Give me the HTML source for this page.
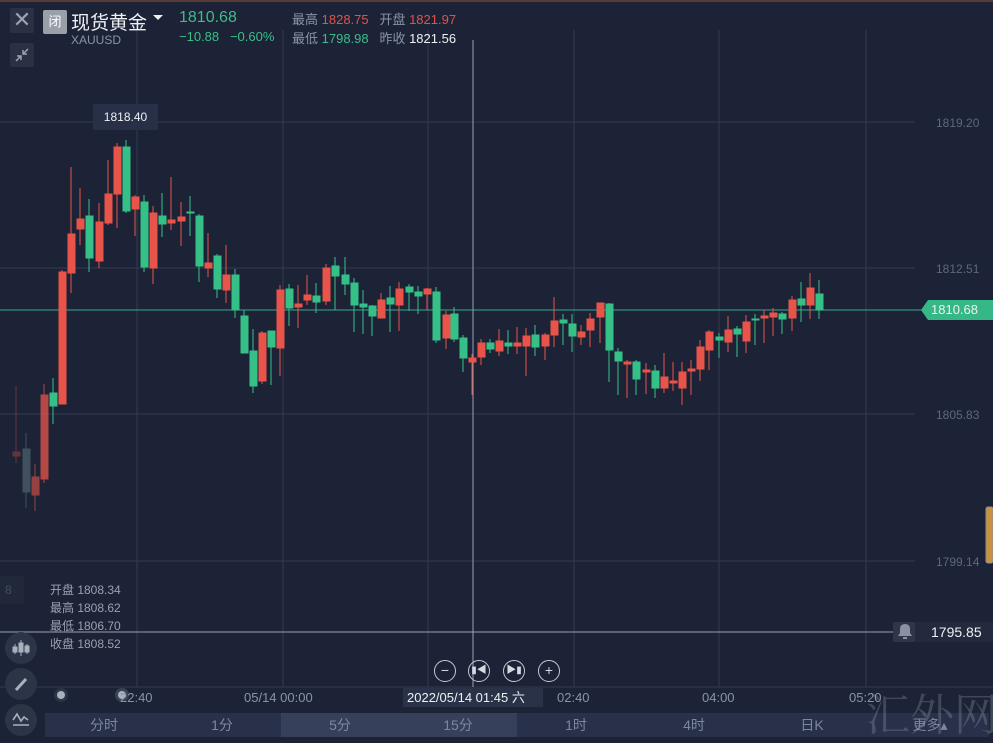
<!DOCTYPE html>
<html><head><meta charset="utf-8"><style>
*{margin:0;padding:0;box-sizing:border-box}
body{width:993px;height:739px;background:#1c2336;position:relative;overflow:hidden;font-family:"Liberation Sans","Noto Sans CJK SC",sans-serif;color:#8a93a6}
.a{position:absolute;white-space:nowrap}
.g{color:#3dbd88}.r{color:#e0534a}.w{color:#eef0f4}
.tab{position:absolute;top:713px;height:24px;text-align:center;font-size:14px;line-height:24px;color:#7d879c}
.circ{position:absolute;width:22px;height:22px;border:1.5px solid #c5cad5;border-radius:50%;color:#d5d9e2;font-size:14px;line-height:19px;text-align:center}
.lb{position:absolute;left:5px;width:32px;height:32px;border-radius:50%;background:#2c3447}
</style></head><body>
<div class="a" style="left:0;top:0;width:993px;height:2px;background:#5a3a36"></div>
<svg class="a" style="left:0;top:0" width="993" height="739">
<g stroke="#333b50" stroke-width="1">
<line x1="0" y1="122" x2="915" y2="122"/><line x1="0" y1="268" x2="915" y2="268"/>
<line x1="0" y1="414" x2="915" y2="414"/><line x1="0" y1="561" x2="915" y2="561"/>
<line x1="137" y1="30" x2="137" y2="687"/><line x1="283" y1="30" x2="283" y2="687"/>
<line x1="428" y1="30" x2="428" y2="687"/><line x1="574" y1="30" x2="574" y2="687"/>
<line x1="719" y1="30" x2="719" y2="687"/><line x1="866" y1="30" x2="866" y2="687"/>
<line x1="0" y1="687" x2="993" y2="687"/>
</g>
<line x1="0" y1="310" x2="922" y2="310" stroke="#3aa58a" stroke-width="1"/>
<line x1="473" y1="40" x2="473" y2="687" stroke="#9aa1b0" stroke-width="1"/>
<line x1="0" y1="632" x2="893" y2="632" stroke="#9aa1b0" stroke-width="1"/>
<g opacity=".35" stroke="#e8544a" fill="#e8544a"><line x1="16" y1="386" x2="16" y2="463"/><rect x="13" y="452" width="7" height="4"/></g>
<g opacity=".45" stroke="#6c8890" fill="#6c8890"><line x1="26" y1="433" x2="26" y2="508"/><rect x="23" y="449" width="7" height="43"/></g>
<g opacity=".6" stroke="#e8544a" fill="#e8544a"><line x1="35" y1="464" x2="35" y2="511"/><rect x="32" y="477" width="7" height="18"/></g>
<g opacity=".75" stroke="#e8544a" fill="#e8544a"><line x1="44" y1="384" x2="44" y2="483"/><rect x="41" y="395" width="7" height="84"/></g>
<g stroke="#e8544a" fill="#e8544a">
<line x1="62" y1="270" x2="62" y2="404"/><rect x="59" y="272" width="7" height="132"/>
<line x1="71" y1="167" x2="71" y2="293"/><rect x="68" y="234" width="7" height="39"/>
<line x1="80" y1="188" x2="80" y2="245"/><rect x="77" y="219" width="7" height="10"/>
<line x1="99" y1="203" x2="99" y2="268"/><rect x="96" y="222" width="7" height="39"/>
<line x1="108" y1="160" x2="108" y2="225"/><rect x="105" y="194" width="7" height="29"/>
<line x1="117" y1="143" x2="117" y2="228"/><rect x="114" y="147" width="7" height="47"/>
<line x1="135" y1="195" x2="135" y2="236"/><rect x="132" y="197" width="7" height="12"/>
<line x1="153" y1="206" x2="153" y2="284"/><rect x="150" y="213" width="7" height="55"/>
<line x1="171" y1="177" x2="171" y2="230"/><rect x="168" y="220" width="7" height="3"/>
<line x1="181" y1="202" x2="181" y2="246"/><rect x="178" y="217" width="7" height="4"/>
<line x1="208" y1="233" x2="208" y2="277"/><rect x="205" y="263" width="7" height="5"/>
<line x1="226" y1="245" x2="226" y2="303"/><rect x="223" y="275" width="7" height="15"/>
<line x1="262" y1="331" x2="262" y2="384"/><rect x="259" y="333" width="7" height="48"/>
<line x1="280" y1="285" x2="280" y2="376"/><rect x="277" y="290" width="7" height="58"/>
<line x1="298" y1="285" x2="298" y2="328"/><rect x="295" y="304" width="7" height="3"/>
<line x1="307" y1="275" x2="307" y2="305"/><rect x="304" y="295" width="7" height="5"/>
<line x1="326" y1="264" x2="326" y2="305"/><rect x="323" y="268" width="7" height="33"/>
<line x1="381" y1="293" x2="381" y2="318"/><rect x="378" y="300" width="7" height="18"/>
<line x1="399" y1="282" x2="399" y2="331"/><rect x="396" y="289" width="7" height="16"/>
<line x1="427" y1="288" x2="427" y2="310"/><rect x="424" y="289" width="7" height="5"/>
<line x1="446" y1="311" x2="446" y2="349"/><rect x="443" y="315" width="7" height="23"/>
<line x1="472" y1="354" x2="472" y2="395"/><rect x="469" y="358" width="7" height="4"/>
<line x1="481" y1="339" x2="481" y2="365"/><rect x="478" y="343" width="7" height="14"/>
<line x1="499" y1="329" x2="499" y2="356"/><rect x="496" y="341" width="7" height="10"/>
<line x1="517" y1="327" x2="517" y2="354"/><rect x="514" y="343" width="7" height="3"/>
<line x1="526" y1="328" x2="526" y2="376"/><rect x="523" y="336" width="7" height="10"/>
<line x1="545" y1="333" x2="545" y2="360"/><rect x="542" y="335" width="7" height="11"/>
<line x1="554" y1="297" x2="554" y2="347"/><rect x="551" y="321" width="7" height="14"/>
<line x1="581" y1="325" x2="581" y2="345"/><rect x="578" y="332" width="7" height="5"/>
<line x1="590" y1="313" x2="590" y2="347"/><rect x="587" y="319" width="7" height="11"/>
<line x1="600" y1="303" x2="600" y2="343"/><rect x="597" y="303" width="7" height="14"/>
<line x1="627" y1="360" x2="627" y2="398"/><rect x="624" y="362" width="7" height="2"/>
<line x1="646" y1="363" x2="646" y2="394"/><rect x="643" y="370" width="7" height="2"/>
<line x1="664" y1="353" x2="664" y2="393"/><rect x="661" y="377" width="7" height="11"/>
<line x1="673" y1="362" x2="673" y2="391"/><rect x="670" y="381" width="7" height="2"/>
<line x1="682" y1="362" x2="682" y2="405"/><rect x="679" y="372" width="7" height="16"/>
<line x1="691" y1="360" x2="691" y2="395"/><rect x="688" y="369" width="7" height="2"/>
<line x1="700" y1="340" x2="700" y2="381"/><rect x="697" y="347" width="7" height="22"/>
<line x1="709" y1="330" x2="709" y2="370"/><rect x="706" y="332" width="7" height="18"/>
<line x1="728" y1="316" x2="728" y2="352"/><rect x="725" y="330" width="7" height="12"/>
<line x1="746" y1="315" x2="746" y2="353"/><rect x="743" y="322" width="7" height="19"/>
<line x1="764" y1="310" x2="764" y2="343"/><rect x="761" y="316" width="7" height="2"/>
<line x1="773" y1="308" x2="773" y2="336"/><rect x="770" y="313" width="7" height="4"/>
<line x1="792" y1="296" x2="792" y2="331"/><rect x="789" y="300" width="7" height="18"/>
<line x1="810" y1="273" x2="810" y2="319"/><rect x="807" y="288" width="7" height="17"/>
</g>
<g stroke="#35c088" fill="#35c088">
<line x1="53" y1="378" x2="53" y2="424"/><rect x="50" y="393" width="7" height="13"/>
<line x1="89" y1="199" x2="89" y2="272"/><rect x="86" y="216" width="7" height="42"/>
<line x1="126" y1="140" x2="126" y2="213"/><rect x="123" y="147" width="7" height="64"/>
<line x1="144" y1="195" x2="144" y2="272"/><rect x="141" y="202" width="7" height="65"/>
<line x1="162" y1="193" x2="162" y2="237"/><rect x="159" y="216" width="7" height="8"/>
<line x1="190" y1="196" x2="190" y2="236"/><rect x="187" y="212" width="7" height="1"/>
<line x1="199" y1="214" x2="199" y2="282"/><rect x="196" y="216" width="7" height="50"/>
<line x1="217" y1="254" x2="217" y2="298"/><rect x="214" y="256" width="7" height="33"/>
<line x1="235" y1="269" x2="235" y2="318"/><rect x="232" y="275" width="7" height="35"/>
<line x1="244" y1="310" x2="244" y2="353"/><rect x="241" y="316" width="7" height="37"/>
<line x1="253" y1="329" x2="253" y2="393"/><rect x="250" y="351" width="7" height="35"/>
<line x1="271" y1="331" x2="271" y2="385"/><rect x="268" y="331" width="7" height="16"/>
<line x1="289" y1="284" x2="289" y2="326"/><rect x="286" y="289" width="7" height="19"/>
<line x1="316" y1="283" x2="316" y2="313"/><rect x="313" y="296" width="7" height="6"/>
<line x1="335" y1="257" x2="335" y2="310"/><rect x="332" y="266" width="7" height="10"/>
<line x1="345" y1="257" x2="345" y2="295"/><rect x="342" y="275" width="7" height="9"/>
<line x1="354" y1="278" x2="354" y2="332"/><rect x="351" y="283" width="7" height="22"/>
<line x1="363" y1="290" x2="363" y2="334"/><rect x="360" y="304" width="7" height="3"/>
<line x1="372" y1="305" x2="372" y2="336"/><rect x="369" y="306" width="7" height="10"/>
<line x1="390" y1="286" x2="390" y2="332"/><rect x="387" y="298" width="7" height="6"/>
<line x1="409" y1="284" x2="409" y2="311"/><rect x="406" y="287" width="7" height="5"/>
<line x1="418" y1="286" x2="418" y2="314"/><rect x="415" y="292" width="7" height="4"/>
<line x1="436" y1="287" x2="436" y2="343"/><rect x="433" y="292" width="7" height="48"/>
<line x1="454" y1="307" x2="454" y2="342"/><rect x="451" y="314" width="7" height="25"/>
<line x1="463" y1="335" x2="463" y2="372"/><rect x="460" y="338" width="7" height="20"/>
<line x1="490" y1="339" x2="490" y2="353"/><rect x="487" y="343" width="7" height="6"/>
<line x1="508" y1="330" x2="508" y2="354"/><rect x="505" y="343" width="7" height="3"/>
<line x1="535" y1="325" x2="535" y2="356"/><rect x="532" y="335" width="7" height="12"/>
<line x1="563" y1="314" x2="563" y2="345"/><rect x="560" y="320" width="7" height="3"/>
<line x1="572" y1="314" x2="572" y2="352"/><rect x="569" y="324" width="7" height="12"/>
<line x1="609" y1="303" x2="609" y2="382"/><rect x="606" y="304" width="7" height="46"/>
<line x1="618" y1="348" x2="618" y2="395"/><rect x="615" y="352" width="7" height="9"/>
<line x1="636" y1="360" x2="636" y2="395"/><rect x="633" y="362" width="7" height="17"/>
<line x1="655" y1="365" x2="655" y2="398"/><rect x="652" y="371" width="7" height="17"/>
<line x1="719" y1="333" x2="719" y2="358"/><rect x="716" y="337" width="7" height="3"/>
<line x1="737" y1="326" x2="737" y2="357"/><rect x="734" y="329" width="7" height="5"/>
<line x1="755" y1="314" x2="755" y2="345"/><rect x="752" y="319" width="7" height="1"/>
<line x1="782" y1="312" x2="782" y2="334"/><rect x="779" y="314" width="7" height="5"/>
<line x1="801" y1="282" x2="801" y2="322"/><rect x="798" y="299" width="7" height="6"/>
<line x1="819" y1="280" x2="819" y2="319"/><rect x="816" y="294" width="7" height="16"/>
</g>
<polygon points="921,310 928,300 993,300 993,320 928,320" fill="#35b886"/>
<rect x="893" y="622" width="22" height="20" rx="2" fill="#2f3649"/>
<path d="M898 636 L912 636 L910 633 L910 629 Q910 624 905 624 Q900 624 900 629 L900 633 Z M903 637 h4 v2 h-4z" fill="#8a91a0"/>
<rect x="915" y="622" width="78" height="20" fill="#232a3d"/>
<rect x="986" y="507" width="7" height="56" rx="2" fill="#c8913a" stroke="#8a90a0"/>
</svg>
<div class="a w" style="left:931px;top:302px;font-size:13px">1810.68</div>
<div class="a w" style="left:931px;top:624px;font-size:14px">1795.85</div>
<div class="a" style="left:936px;top:116px;font-size:12px;color:#5f687b">1819.20</div>
<div class="a" style="left:936px;top:262px;font-size:12px;color:#5f687b">1812.51</div>
<div class="a" style="left:936px;top:408px;font-size:12px;color:#5f687b">1805.83</div>
<div class="a" style="left:936px;top:555px;font-size:12px;color:#5f687b">1799.14</div>

<div class="a" style="left:10px;top:8px;width:24px;height:25px;background:#2a3144;border-radius:2px;color:#9ca3b2;font-size:22px;line-height:24px;text-align:center">✕</div>
<div class="a" style="left:10px;top:43px;width:24px;height:24px;background:#2a3144;border-radius:2px"></div>
<svg class="a" style="left:14px;top:47px" width="16" height="16"><path d="M2 14 L7 9 M3 9 H7 V13 M14 2 L9 7 M9 3 V7 H13" stroke="#9ca3b2" stroke-width="1.5" fill="none"/></svg>
<div class="a" style="left:43px;top:10px;width:24px;height:24px;background:#9aa0a8;border-radius:2px;color:#fff;font-size:13px;line-height:24px;text-align:center">闭</div>
<div class="a w" style="left:71px;top:8px;font-size:19px">现货黄金</div>
<div class="a" style="left:153px;top:15px;width:0;height:0;border-left:5px solid transparent;border-right:5px solid transparent;border-top:5px solid #eee"></div>
<div class="a" style="left:71px;top:33px;font-size:12px">XAUUSD</div>
<div class="a g" style="left:179px;top:9px;font-size:16px">1810.68</div>
<div class="a g" style="left:179px;top:29px;font-size:13px">−10.88 &nbsp;&nbsp;−0.60%</div>
<div class="a" style="left:292px;top:9px;font-size:13px">最高 <span class="r">1828.75</span>&nbsp;&nbsp; 开盘 <span class="r">1821.97</span></div>
<div class="a" style="left:292px;top:28px;font-size:13px">最低 <span class="g">1798.98</span>&nbsp;&nbsp; 昨收 <span class="w">1821.56</span></div>

<div class="a w" style="left:93px;top:104px;width:65px;height:26px;background:#283048;font-size:12px;line-height:26px;text-align:center">1818.40</div>

<div class="a" style="left:0;top:576px;width:24px;height:28px;background:#20283a;color:#444c60;font-size:12px;line-height:28px;padding-left:5px">8</div>
<div class="a" style="left:50px;top:581px;font-size:12px;line-height:18px;color:#9aa1b0">开盘 1808.34<br>最高 1808.62<br>最低 1806.70<br>收盘 1808.52</div>

<div class="lb" style="top:632px"></div>
<svg class="a" style="left:11px;top:638px" width="20" height="20"><g fill="#aab0bd" stroke="#aab0bd"><line x1="4" y1="6" x2="4" y2="16"/><rect x="2" y="9" width="4" height="5"/><line x1="10" y1="2" x2="10" y2="18"/><rect x="8" y="5" width="4" height="9"/><line x1="16" y1="6" x2="16" y2="16"/><rect x="14" y="8" width="4" height="6"/></g></svg>
<div class="lb" style="top:668px"></div>
<svg class="a" style="left:11px;top:674px" width="20" height="20"><path d="M5 16 L15 5" stroke="#aab0bd" stroke-width="3"/></svg>
<div class="lb" style="top:704px"></div>
<svg class="a" style="left:10px;top:709px" width="22" height="20"><path d="M3 11 L7 5 L11 12 L14 8 L18 11 M3 16 H19" stroke="#aab0bd" stroke-width="1.6" fill="none"/></svg>

<div class="a" style="left:54px;top:688px;width:14px;height:14px;border-radius:50%;background:#2c3447"></div>
<div class="a" style="left:57px;top:691px;width:8px;height:8px;border-radius:50%;background:#aab0bd"></div>
<div class="a" style="left:115px;top:688px;width:14px;height:14px;border-radius:50%;background:#3a4255"></div>
<div class="a" style="left:118px;top:691px;width:8px;height:8px;border-radius:50%;background:#aab0bd"></div>

<div class="circ" style="left:434px;top:660px">−</div>
<div class="circ" style="left:468px;top:660px;font-size:10px">▮◀</div>
<div class="circ" style="left:503px;top:660px;font-size:10px">▶▮</div>
<div class="circ" style="left:538px;top:660px">+</div>

<div class="a" style="left:120px;top:690px;font-size:13px">22:40</div>
<div class="a" style="left:244px;top:690px;font-size:13px">05/14 00:00</div>
<div class="a w" style="left:403px;top:688px;width:140px;height:19px;background:#2a3248;font-size:13px;line-height:19px;padding-left:4px">2022/05/14 01:45 六</div>
<div class="a" style="left:557px;top:690px;font-size:13px">02:40</div>
<div class="a" style="left:702px;top:690px;font-size:13px">04:00</div>
<div class="a" style="left:849px;top:690px;font-size:13px">05:20</div>

<div class="a" style="left:45px;top:713px;width:944px;height:24px;background:#28304a"></div>
<div class="a" style="left:281px;top:713px;width:236px;height:24px;background:#37405a"></div>
<div class="tab" style="left:45px;width:118px">分时</div>
<div class="tab" style="left:163px;width:118px">1分</div>
<div class="tab" style="left:281px;width:118px">5分</div>
<div class="tab" style="left:399px;width:118px">15分</div>
<div class="tab" style="left:517px;width:118px">1时</div>
<div class="tab" style="left:635px;width:118px">4时</div>
<div class="tab" style="left:753px;width:118px">日K</div>
<div class="tab" style="left:871px;width:118px">更多▴</div>
<div class="a" style="left:866px;top:686px;font-family:'Noto Serif CJK SC',serif;font-size:44px;line-height:50px;color:rgba(200,205,215,.22)">汇外网</div>
</body></html>
